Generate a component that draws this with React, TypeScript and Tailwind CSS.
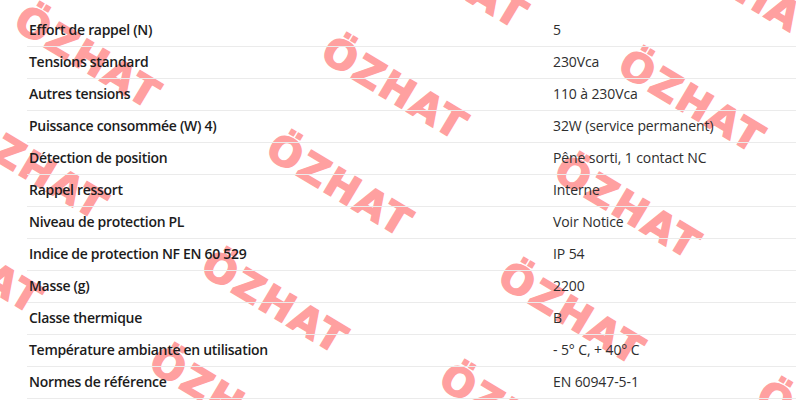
type Spec = {
  label: string;
  value: string;
};

const specs: Spec[] = [
  { label: "Effort de rappel (N)", value: "5" },
  { label: "Tensions standard", value: "230Vca" },
  { label: "Autres tensions", value: "110 à 230Vca" },
  { label: "Puissance consommée (W) 4)", value: "32W (service permanent)" },
  { label: "Détection de position", value: "Pêne sorti, 1 contact NC" },
  { label: "Rappel ressort", value: "Interne" },
  { label: "Niveau de protection PL", value: "Voir Notice" },
  { label: "Indice de protection NF EN 60 529", value: "IP 54" },
  { label: "Masse (g)", value: "2200" },
  { label: "Classe thermique", value: "B" },
  { label: "Température ambiante en utilisation", value: "- 5° C, + 40° C" },
  { label: "Normes de référence", value: "EN 60947-5-1" },
];

// centres of the watermark stamps
const marks: [number, number][] = [
  [455, -23],
  [752, -7],
  [88, 57],
  [395, 88],
  [692, 101],
  [35, 168],
  [340, 185],
  [628, 207],
  [-30, 262],
  [275, 302],
  [572, 313],
  [870, 348],
  [223, 398],
  [513, 415],
  [830, 432],
];

const Watermark = ({ x, y }: { x: number; y: number }) => (
  <span
    className="absolute whitespace-nowrap font-bold text-[40px] leading-none tracking-[2px] text-[#ffa0a0] [-webkit-text-stroke:1.5px_#ffa0a0] select-none [font-family:'DejaVu_Sans',sans-serif]"
    style={{ left: x, top: y, transform: "translate(-50%, -50%) rotate(31deg)" }}
  >
    ÖZHAT
  </span>
);

const App = () => {
  return (
    <div className="relative w-[796px] h-[400px] overflow-hidden bg-white [font-family:'Open_Sans',sans-serif]">
      {marks.map(([x, y], i) => (
        <Watermark key={i} x={x} y={y} />
      ))}
      <div className="relative ml-[27px] pt-[15px]">
        {specs.map((s) => (
          <div
            key={s.label}
            className="flex items-center h-[32px] pb-[2px] border-b border-[#ebebeb] text-[14px] text-[#1c1c1c]"
          >
            <div className="w-[526px] pl-[2px] font-semibold tracking-[-0.3px]">{s.label}</div>
            <div className="text-[#2e2e2e] tracking-[-0.1px]">{s.value}</div>
          </div>
        ))}
      </div>
    </div>
  );
};

export default App;
